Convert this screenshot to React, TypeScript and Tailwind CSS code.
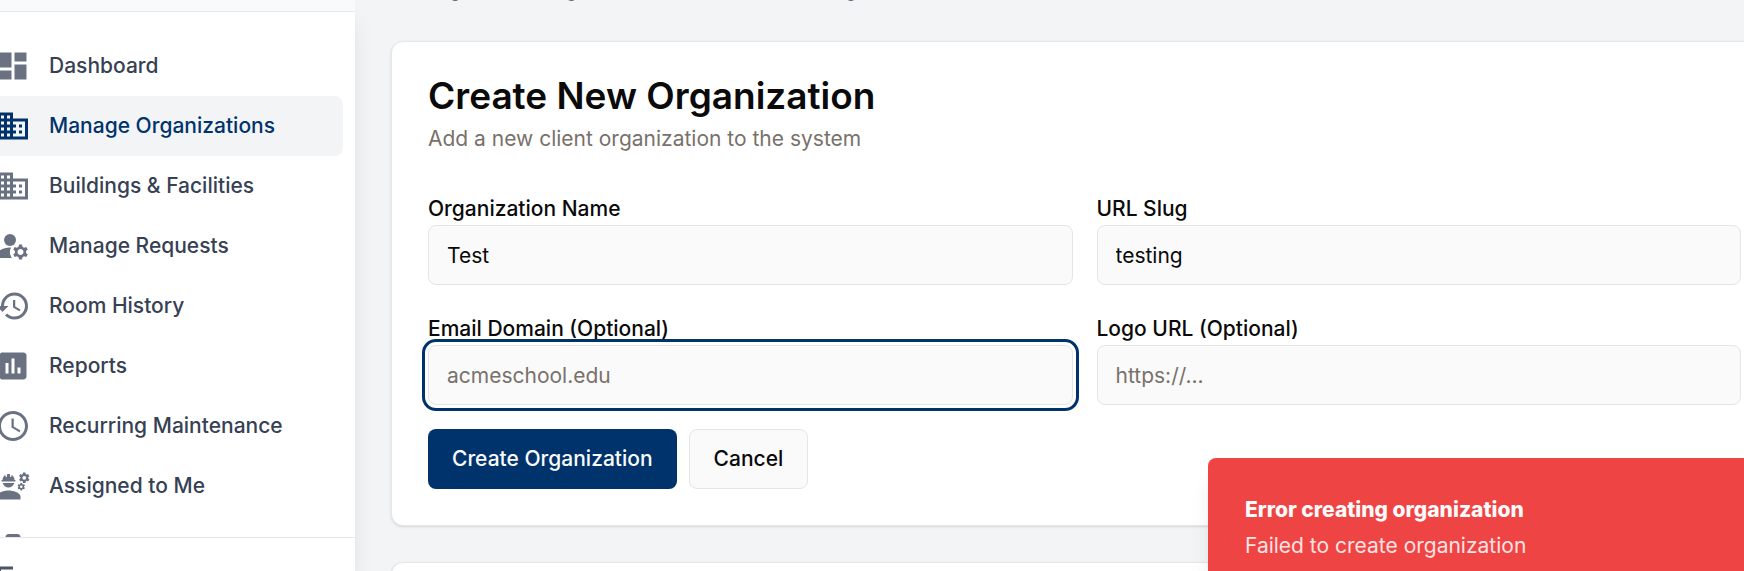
import { useState } from "react";
import type { ReactNode } from "react";
import type { IconType } from "react-icons";
import {
  MdDashboard,
  MdBusiness,
  MdManageAccounts,
  MdHistory,
  MdAssessment,
  MdSchedule,
  MdEngineering,
  MdHomeRepairService,
  MdLogout,
} from "react-icons/md";

type NavEntry = { label: string; icon: IconType; active?: boolean };

const entries: NavEntry[] = [
  { label: "Dashboard", icon: MdDashboard },
  { label: "Manage Organizations", icon: MdBusiness, active: true },
  { label: "Buildings & Facilities", icon: MdBusiness },
  { label: "Manage Requests", icon: MdManageAccounts },
  { label: "Room History", icon: MdHistory },
  { label: "Reports", icon: MdAssessment },
  { label: "Recurring Maintenance", icon: MdSchedule },
  { label: "Assigned to Me", icon: MdEngineering },
];

function NavItem({ label, icon: Icon, active }: NavEntry) {
  return (
    <a
      href="#"
      aria-current={active ? "page" : undefined}
      className={
        active
          ? "flex h-15 shrink-0 items-center gap-4.5 rounded-lg bg-gray-100 pl-4.5 font-medium text-[#00336b]"
          : "flex h-15 shrink-0 items-center gap-4.5 rounded-lg pl-4.5 font-medium text-gray-700"
      }
    >
      <Icon className={active ? "size-9 text-[#00336b]" : "size-9 text-gray-500"} />
      {label}
    </a>
  );
}

function Sidebar() {
  return (
    <aside className="z-10 flex h-full w-[355px] shrink-0 flex-col overflow-hidden bg-white shadow-xl">
      <div className="h-3 shrink-0 border-b border-gray-200 bg-gray-50" />
      <nav className="-ml-[23px] mr-3 flex min-h-0 flex-1 flex-col overflow-hidden pt-6">
        {entries.map((entry) => (
          <NavItem key={entry.label} {...entry} />
        ))}
        <a href="#" aria-label="Maintenance" className="flex h-15 shrink-0 items-center pl-4.5">
          <MdHomeRepairService className="size-9 text-gray-500" />
        </a>
      </nav>
      <div className="h-[34px] shrink-0 overflow-hidden border-t border-gray-200 pt-6">
        <button aria-label="Log out" className="-ml-[5px] block text-gray-600">
          <MdLogout className="size-9" />
        </button>
      </div>
    </aside>
  );
}

type FieldProps = {
  id: string;
  label: string;
  value?: string;
  placeholder?: string;
  highlighted?: boolean;
};

function Field({ id, label, value = "", placeholder, highlighted }: FieldProps) {
  const [text, setText] = useState(value);
  return (
    <div className="flex flex-col">
      <label htmlFor={id} className="h-8 font-medium leading-8">
        {label}
      </label>
      <input
        id={id}
        value={text}
        placeholder={placeholder}
        onChange={(event) => setText(event.target.value)}
        className={
          highlighted
            ? "h-15 w-full rounded-lg border border-neutral-200 bg-neutral-50 px-4.5 outline-3 outline-offset-3 outline-[#00336b] placeholder:text-stone-500"
            : "h-15 w-full rounded-lg border border-neutral-200 bg-neutral-50 px-4.5 outline-none placeholder:text-stone-500"
        }
      />
    </div>
  );
}

function Card({ children }: { children?: ReactNode }) {
  return (
    <section className="rounded-xl border border-gray-200 bg-white p-9 shadow-sm">{children}</section>
  );
}

function Toast() {
  return (
    <div
      role="alert"
      className="absolute right-0 bottom-0 z-20 h-[113px] w-[536px] rounded-tl-lg bg-[#ef4444] px-[37px] pt-[34px] text-neutral-50 shadow-xl"
    >
      <p className="font-extrabold leading-9">Error creating organization</p>
      <p className="leading-9 text-red-100">Failed to create organization</p>
    </div>
  );
}

export default function App() {
  return (
    <div className="relative flex h-screen overflow-hidden bg-gray-100 font-['Inter',sans-serif] text-[21px] text-neutral-950">
      <Sidebar />
      <main className="-mr-[34px] flex min-w-0 flex-1 flex-col gap-9 pl-9">
        <p className="-mt-7 h-[33px] shrink-0 text-[22px] leading-[33px] text-gray-600">
          Manage client organizations and their settings
        </p>
        <Card>
          <h1 className="text-[37px] font-semibold leading-9">Create New Organization</h1>
          <p className="mt-[9px] leading-8 text-stone-500">Add a new client organization to the system</p>
          <form className="pt-[38px]" onSubmit={(event) => event.preventDefault()}>
            <div className="grid grid-cols-2 gap-x-6 gap-y-7">
              <Field id="name" label="Organization Name" value="Test" />
              <Field id="slug" label="URL Slug" value="testing" />
              <Field id="domain" label="Email Domain (Optional)" placeholder="acmeschool.edu" highlighted />
              <Field id="logo" label="Logo URL (Optional)" placeholder="https://..." />
            </div>
            <div className="mt-6 flex gap-3">
              <button type="submit" className="h-15 rounded-lg bg-[#00336b] px-6 font-medium text-neutral-50">
                Create Organization
              </button>
              <button
                type="button"
                className="h-15 rounded-lg border border-neutral-200 bg-neutral-50 px-6 font-medium"
              >
                Cancel
              </button>
            </div>
          </form>
        </Card>
        <Card />
      </main>
      <Toast />
    </div>
  );
}
